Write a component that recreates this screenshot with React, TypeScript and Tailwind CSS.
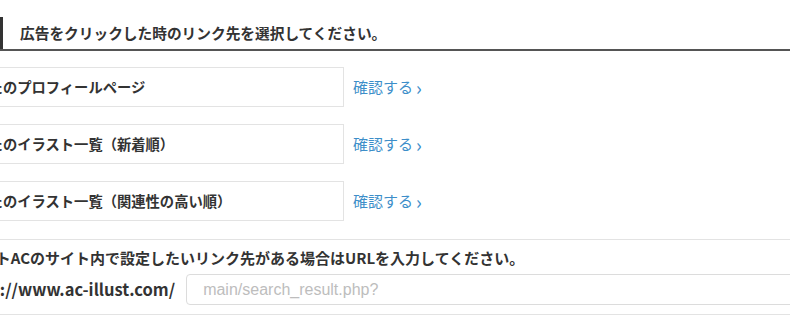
const options = [
  "あなたのプロフィールページ",
  "あなたのイラスト一覧（新着順）",
  "あなたのイラスト一覧（関連性の高い順）",
];

export default function App() {
  return (
    <div className="w-[790px] h-[324px] overflow-hidden bg-white text-[#333] font-['Noto_Sans_CJK_JP','Noto_Sans',sans-serif]">
      <div className="pt-[17px] border-b-2 border-[#555]">
        <div className="h-[32px] border-l-[3px] border-[#333] pl-[17px] flex items-center">
          <h2 className="text-[14.7px] font-bold leading-none">
            広告をクリックした時のリンク先を選択してください。
          </h2>
        </div>
      </div>

      <div className="-ml-[56px] w-[1000px]">
        <div className="pt-[16px] flex flex-col gap-[17px]">
          {options.map((label) => (
            <div key={label} className="flex items-center">
              <div className="w-[400px] h-[40px] border border-[#e3e3e3] bg-white pl-[15px] flex items-center">
                <span className="text-[14.3px] font-bold">{label}</span>
              </div>
              <a className="ml-[9px] text-[15px] text-[#3d8ec9] flex items-center gap-[3px]">
                確認する<span className="text-[19px] leading-none -mt-[2px]">›</span>
              </a>
            </div>
          ))}
        </div>

        <div className="mt-[18px] border-t border-b border-[#e3e3e3] pt-[8px] pb-[9px]">
          <p className="pl-[7px] text-[15px] font-bold leading-[20px]">
            イラストACのサイト内で設定したいリンク先がある場合はURLを入力してください。
          </p>
          <div className="mt-[6px] flex items-center">
            <span className="pl-[13px] text-[16.5px] font-bold">https://www.ac-illust.com/</span>
            <input
              placeholder="main/search_result.php?"
              className="ml-[11px] w-[700px] h-[31px] rounded-[4px] border border-[#dcdcdc] pl-[16px] text-[16px] font-['Liberation_Sans',sans-serif] placeholder:text-[#bdbdbd] focus:outline-none"
            />
          </div>
        </div>
      </div>
    </div>
  );
}
